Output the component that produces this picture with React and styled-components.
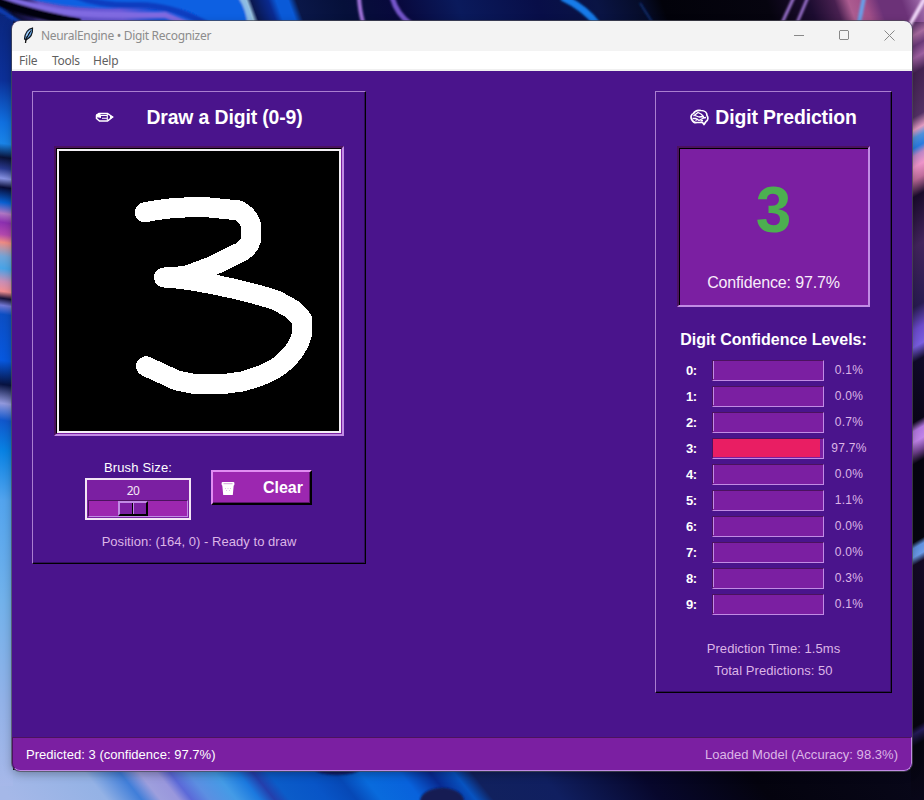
import React from "react";
import styled, { createGlobalStyle } from "styled-components";

const Global = createGlobalStyle`
  * { box-sizing: border-box; }
  html, body { margin: 0; padding: 0; overflow: hidden; background: #05050f; }
`;

const c = {
  bg: "#4a148c",
  surface: "#7b1fa2",
  accent: "#9c27b0",
  light: "#c18be4",
  dark: "#4b125f",
  muted: "#dcb5e6",
};

const Desktop = styled.main`
  position: relative;
  width: 924px;
  height: 800px;
  padding: 21px 12px 29px;
  overflow: hidden;
  font-family: "Liberation Sans", Arial, sans-serif;
  color: #fff;
`;

const WallpaperArt = styled.svg`
  position: absolute;
  inset: 0;
  width: 924px;
  height: 800px;
`;

const Window = styled.section`
  position: relative;
  display: flex;
  flex-direction: column;
  width: 900px;
  height: 750px;
  border-radius: 8px;
  overflow: hidden;
  background: ${c.bg};
  box-shadow: 0 0 0 1px rgba(75, 75, 85, 0.7), 0 3px 10px rgba(0, 0, 0, 0.3);
`;

const TitleBar = styled.header`
  display: flex;
  align-items: center;
  height: 30px;
  padding: 0 17px 0 10px;
  background: #f3f3f3;
  color: #8c8c8c;
  font: 12px/30px "Noto Sans", sans-serif;
`;

const Title = styled.span`
  flex: 1;
  margin-left: 7px;
  letter-spacing: -0.31px;
`;

const WindowButtons = styled.div`
  display: flex;
  gap: 34px;
  margin-top: -1px;
`;

const MenuBar = styled.nav`
  display: flex;
  gap: 14px;
  height: 20px;
  padding-left: 7px;
  background: #fff;
  border-bottom: 2px solid #f0f0f0;
  color: #5f5f5f;
  font: 12px/20px "Noto Sans", sans-serif;
`;

const MenuItem = styled.span`
  width: ${(p) => p.$width}px;
  letter-spacing: ${(p) => p.$tracking}px;
  white-space: nowrap;
`;

const Body = styled.div`
  flex: 1;
  display: flex;
  justify-content: space-between;
  align-items: flex-start;
  padding: 20px 20px 0;
`;

const Panel = styled.section`
  display: flex;
  flex-direction: column;
  align-items: center;
  width: ${(p) => p.$width}px;
  height: ${(p) => p.$height}px;
  padding-top: 14px;
  border: 1px solid;
  border-color: #aa7ed0 #000 #000 #aa7ed0;
  box-shadow: inset -1px -1px #310d5e;
`;

const Heading = styled.h2`
  display: flex;
  align-items: center;
  gap: ${(p) => p.$gap}px;
  height: 23px;
  margin: 0 0 17px;
  font-size: 19.4px;
  line-height: 23px;
  font-weight: 700;
  letter-spacing: -0.12px;
  white-space: nowrap;
`;

const Sunken = styled.div`
  border: 2px solid;
  border-color: ${c.dark} ${c.light} ${c.light} ${c.dark};
`;

const CanvasFrame = styled(Sunken)`
  width: 290px;
  height: 290px;
`;

const CanvasEdge = styled.div`
  border: 1px solid;
  border-color: #000 ${c.surface} ${c.surface} #000;
`;

const Canvas = styled.svg`
  display: block;
  width: 284px;
  height: 284px;
  border: 2px solid #f3eff5;
  background: #000;
`;

const Controls = styled.div`
  display: flex;
  gap: 20px;
  height: 84px;
  margin-top: 24px;
  align-self: flex-start;
  padding-left: 52px;
`;

const BrushControl = styled.div`
  display: flex;
  flex-direction: column;
  align-items: center;
  width: 106px;
`;

const Label = styled.span`
  height: 18px;
  font-size: 13px;
  line-height: 16px;
  letter-spacing: 0.15px;
`;

const Scale = styled.div`
  width: 106px;
  height: 42px;
  padding: 1px;
  border: 2px solid #f3e5f5;
  background: ${c.surface};
`;

const ScaleValue = styled.div`
  height: 19px;
  padding-right: 10px;
  text-align: center;
  color: #f3e5f5;
  font: 12px/20px "Noto Sans", sans-serif;
  letter-spacing: -0.5px;
`;

const Trough = styled.div`
  display: flex;
  height: 17px;
  padding-left: 29px;
  border: 1px solid;
  border-color: ${c.dark} ${c.light} ${c.light} ${c.dark};
  background: ${c.accent};
`;

const Thumb = styled.div`
  display: grid;
  grid-template-columns: 1fr 1fr;
  width: 30px;
  height: 15px;
  border: 2px solid;
  border-color: ${c.light} #000 #000 ${c.light};
  background: ${c.surface};
`;

const ThumbHalf = styled.span`
  border-left: ${(p) => (p.$left ? 0 : 1)}px solid ${c.light};
  border-right: ${(p) => (p.$left ? 1 : 0)}px solid #000;
`;

const ClearButton = styled.button`
  display: flex;
  align-items: center;
  justify-content: space-between;
  width: 101px;
  height: 35px;
  margin-top: 10px;
  padding: 1px 7px 0 8px;
  border: 2px solid;
  border-color: #e18df2 #000 #000 #e18df2;
  box-shadow: inset -1px -1px #5c176b;
  background: ${c.accent};
  color: #fff;
  font: 700 16px "Liberation Sans", Arial, sans-serif;
`;

const Position = styled.p`
  margin: -11px 0 0;
  font-size: 13px;
  line-height: 17px;
  letter-spacing: 0.03px;
  color: ${c.muted};
  white-space: nowrap;
`;

const Result = styled(Sunken)`
  width: 193px;
  height: 161px;
  background: ${c.surface};
  box-shadow: inset 1px 1px #000;
  text-align: center;
`;

const BigDigit = styled.div`
  margin-top: 26px;
  height: 73px;
  font-size: 64px;
  line-height: 73px;
  font-weight: 700;
  color: #4caf50;
`;

const Confidence = styled.div`
  margin-top: 26px;
  font-size: 16px;
  line-height: 19px;
  letter-spacing: -0.15px;
  color: #f8ecfa;
`;

const LevelsTitle = styled.h3`
  margin: 23px 0 11px;
  height: 19px;
  font-size: 16px;
  line-height: 19px;
  white-space: nowrap;
`;

const Levels = styled.div`
  display: flex;
  flex-direction: column;
  gap: 6px;
  width: 187px;
`;

const LevelRow = styled.div`
  display: grid;
  grid-template-columns: 32px 112px 50px;
  height: 20px;
`;

const LevelDigit = styled.span`
  padding-left: 6px;
  font-size: 13px;
  line-height: 21px;
  font-weight: 700;
  letter-spacing: -0.4px;
`;

const Track = styled.div`
  border: 1px solid;
  border-color: ${c.dark} ${c.light} ${c.light} ${c.dark};
  background: ${c.surface};
`;

const Fill = styled.div`
  height: 18px;
  background: ${(p) => (p.$active ? "#e91e63" : c.light)};
`;

const Percent = styled.span`
  font-size: 12px;
  line-height: 20px;
  letter-spacing: 0.25px;
  text-align: center;
  color: ${c.muted};
`;

const Stats = styled.div`
  margin-top: 24px;
  font-size: 13px;
  line-height: 22px;
  letter-spacing: 0.06px;
  text-align: center;
  color: ${c.muted};
`;

const StatusBar = styled.footer`
  display: flex;
  justify-content: space-between;
  height: 34px;
  padding: 0 13px;
  border: 1px solid;
  border-color: ${c.dark} ${c.light} ${c.light} ${c.dark};
  border-radius: 0 0 8px 8px;
  background: ${c.surface};
  font-size: 13px;
  line-height: 33px;
  letter-spacing: 0.03px;
`;

const StatusText = styled.span`
  color: ${(p) => (p.$muted ? c.muted : "#fff")};
`;

const stops = {
  top: [
    [0, "#0b2478"], [12, "#080a28"], [30, "#241c60"], [42, "#6452c4"], [120, "#6858d8"],
    [155, "#1450d8"], [205, "#0a62e8"], [228, "#1e86ff"], [242, "#62a8f0"], [250, "#9cc4dc"],
    [255, "#0a1850"], [272, "#0a2a90"], [280, "#0a5ad8"], [292, "#0a5ad8"], [300, "#0a1748"],
    [345, "#06103a"], [400, "#08083c"], [460, "#0a1a5c"], [540, "#080e48"], [600, "#0a1444"],
    [645, "#060c28"], [665, "#02020a"], [770, "#06040f"], [812, "#1c0c30"], [838, "#482050"],
    [852, "#ac5c90"], [868, "#a04e88"], [882, "#6c3278"], [905, "#6c3278"], [924, "#9c68a8"],
  ],
  left: [
    [0, "#0a2478"], [80, "#0c3098"], [122, "#1070e0"], [143, "#1a84e8"], [157, "#0a1238"],
    [168, "#28388c"], [178, "#8792e2"], [187, "#090c38"], [202, "#0860d2"], [213, "#b076c4"],
    [222, "#8c30b0"], [234, "#b348ae"], [242, "#ee8b84"], [256, "#72a4d8"], [268, "#48a4e8"],
    [281, "#c98fb7"], [291, "#f18d91"], [298, "#18133b"], [305, "#7278d5"], [314, "#0c4ec4"],
    [360, "#0758df"], [384, "#081342"], [403, "#9299dd"], [420, "#1057cc"], [450, "#0882e4"],
    [500, "#53a4ee"], [600, "#72b2eb"], [700, "#92b2e8"], [800, "#aab9e9"],
  ],
  right: [
    [0, "#efcdf3"], [12, "#d2afe5"], [19, "#49245b"], [33, "#a66a9e"], [44, "#6a3978"],
    [56, "#9d60a0"], [71, "#432251"], [115, "#523064"], [128, "#e29bc1"], [136, "#4f91dc"],
    [146, "#287ce0"], [154, "#be86c5"], [165, "#ee94c9"], [178, "#bf6c9b"], [195, "#1a0b2b"],
    [245, "#42245c"], [305, "#281b51"], [328, "#6b4acb"], [345, "#795ee0"], [360, "#100a28"],
    [420, "#0a0618"], [429, "#b276df"], [440, "#c184e9"], [451, "#70418e"], [462, "#06040f"],
    [540, "#06060f"], [546, "#5f91df"], [555, "#6b9be8"], [563, "#140a25"], [725, "#07050f"],
    [732, "#251b58"], [744, "#05050e"], [800, "#080618"],
  ],
  bottom: [
    [0, "#a5b8e8"], [95, "#94b2e5"], [130, "#407ed9"], [149, "#9e9fdd"], [167, "#9997dc"],
    [180, "#5b69d8"], [198, "#5c8fe2"], [225, "#449be6"], [248, "#1b79df"], [263, "#243fac"],
    [278, "#0b5cc9"], [315, "#0855c7"], [345, "#0648b6"], [370, "#096bdd"], [410, "#0862dc"],
    [440, "#082a91"], [464, "#0753c1"], [482, "#11215e"], [550, "#101f60"], [650, "#07072c"],
    [760, "#04030e"], [924, "#080719"],
  ],
};

const Ramp = ({ id, list, span, slant, vertical }) => (
  <linearGradient
    id={id}
    gradientUnits="userSpaceOnUse"
    x1="0"
    y1="0"
    x2={vertical ? 0 : span}
    y2={vertical ? span : 0}
    gradientTransform={slant}
  >
    {list.map(([at, color]) => (
      <stop key={at} offset={at / span} stopColor={color} />
    ))}
  </linearGradient>
);

function Wallpaper() {
  return (
    <WallpaperArt viewBox="0 0 924 800" aria-hidden="true">
      <defs>
        <Ramp id="top" list={stops.top} span={924} slant="translate(-4 0) skewX(20)" />
        <Ramp id="left" list={stops.left} span={800} slant="skewY(8)" vertical />
        <Ramp id="right" list={stops.right} span={800} slant="translate(0 530) skewY(-30)" vertical />
        <Ramp id="bottom" list={stops.bottom} span={924} slant="translate(-629 0) skewX(38.7)" />
        <filter id="soft"><feGaussianBlur stdDeviation="1.2" /></filter>
      </defs>
      <rect width="924" height="24" fill="url(#top)" />
      <rect y="770" width="924" height="30" fill="url(#bottom)" />
      <rect y="16" width="13" height="770" fill="url(#left)" />
      <rect x="911" y="22" width="13" height="778" fill="url(#right)" />
      <g fill="none" filter="url(#soft)">
        <path d="M18 -4Q75 12 135 7T205 24H250Q250 6 241-4Z" fill="#0a60e2" />
        <path d="M75 -4Q100 6 135 5T207 24" stroke="#0b3cc0" strokeWidth="6" />
        <path d="M-6-4Q32 6 58 11T165 15L190 25" stroke="#806be1" strokeWidth="6" />
        <path d="M-4 1Q27 13 80 23" stroke="#030309" strokeWidth="9" />
        <path d="M-2 9L24 25" stroke="#103cb0" strokeWidth="4" />
        <path d="M241-3Q249 10 250 24" stroke="#8dbbe4" strokeWidth="5" />
        <path d="M359-2Q360 12 363 22" stroke="#a374dc" strokeWidth="4" />
        <path d="M392-3Q397 15 411 24" stroke="#7555cb" strokeWidth="5" />
        <path d="M562-3Q585 8 597 24" stroke="#127be9" strokeWidth="7" />
        <path d="M640 3L652 22" stroke="#102f70" strokeWidth="2" />
        <path d="M794-3L782 23M808-3L797 23" stroke="#9870ca" strokeWidth="3" />
        <path d="M864-3L859 23" stroke="#689ee8" strokeWidth="4" />
        <path d="M925-2L908 28" stroke="#efd5f7" strokeWidth="4" />
        <ellipse cx="337" cy="769" rx="22" ry="6" fill="#0b1e65" />
        <ellipse cx="442" cy="801" rx="22" ry="13" fill="#131b52" />
      </g>
    </WallpaperArt>
  );
}

const Feather = () => (
  <svg width="12" height="18" viewBox="0 0 12 18">
    <path d="M10.5 1C6 2 3 6 2.5 12L4 13C8 11 11 7 10.5 1Z" fill="#69a7e8" stroke="#111820" strokeWidth="1.2" />
    <path d="M9 3L4 12L3.5 16" fill="none" stroke="#111" strokeWidth="1.3" />
    <path d="M8.5 3Q5.2 6 4.5 9" fill="none" stroke="#b6dcff" strokeWidth="1" />
  </svg>
);

const ControlIcon = ({ d }) => (
  <svg width="11" height="11" viewBox="0 0 11 11">
    <path d={d} fill="none" stroke="#888" strokeWidth="1" />
  </svg>
);

const Pencil = () => (
  <svg width="19" height="11" viewBox="0 0 19 11">
    <path d="M4 1.5H12.5L17.5 5L12.5 9H4.5L1.5 6.5V3.5Z" fill="none" stroke="#fff" strokeWidth="1.5" />
    <path d="M1 2.5L4 1L6 3V6L3.5 5.5L1 5Z M15 3L18.5 5L15 7.5Z" fill="#fff" />
    <path d="M6 3.5H12M7 6.3H12M12.3 2V8.5" fill="none" stroke="#fff" strokeWidth="1.1" />
  </svg>
);

const Brain = () => (
  <svg width="19" height="17" viewBox="0 0 19 17" fill="none" stroke="#fff" strokeLinejoin="round">
    <path d="M2 11C0 8 1.5 5 3.5 4.5C5 1.5 8 1 11 1.5C15 1.5 17 4 17 6.5C18.5 8.5 18 11.5 16 12.5L14 15.5L12.5 13.5H7C4.5 14 3 13 2 11Z" strokeWidth="1.7" />
    <path d="M3.5 7L8 3.5L11 5L13.5 7.5L9 8L5 6.5M2.5 9.5H6L9 11.5L13.5 9L16 8.5" strokeWidth="1.3" />
    <path d="M5.5 11.5L8 10M10.5 12L13 11.5" strokeWidth="1.3" />
  </svg>
);

const Trash = () => (
  <svg width="14" height="15" viewBox="0 0 14 15">
    <path d="M1.2 3.5H12.8L11.8 14H2.2Z" fill="#fff" />
    <rect x=".6" y="1" width="12.8" height="3.4" rx="1" fill="#fff" />
    <path d="M2.5 2.7H11.5" stroke="#c78bd1" strokeWidth=".8" />
    <path d="M4 7.5H5M6.5 7.5H7.5M9 7.5H10M5 9.5H6M8 9.5H9" stroke="#e3c2e8" strokeWidth="1" />
  </svg>
);

const levels = [0.1, 0.0, 0.7, 97.7, 0.0, 1.1, 0.0, 0.0, 0.3, 0.1];

export default function App() {
  return (
    <Desktop>
      <Global />
      <Wallpaper />
      <Window>
        <TitleBar>
          <Feather />
          <Title>NeuralEngine • Digit Recognizer</Title>
          <WindowButtons>
            <ControlIcon d="M0 5.5H10" />
            <ControlIcon d="M1 .5H9L9.5 1V9L9 9.5H1L.5 9V1Z" />
            <ControlIcon d="M.5 .5L10.5 10.5M10.5 .5L.5 10.5" />
          </WindowButtons>
        </TitleBar>
        <MenuBar>
          <MenuItem $width={19} $tracking={-0.2}>File</MenuItem>
          <MenuItem $width={27} $tracking={-0.3}>Tools</MenuItem>
          <MenuItem $width={25} $tracking={-0.2}>Help</MenuItem>
        </MenuBar>
        <Body>
          <Panel $width={334} $height={473}>
            <Heading $gap={32}>
              <Pencil />
              <span>Draw a Digit (0-9)</span>
            </Heading>
            <CanvasFrame>
              <CanvasEdge>
                <Canvas viewBox="0 0 280 280">
                  <path
                    d="M85.7 61.3C105 57 125 56 145 56L180 59.5L186 64Q192 70 192 76V89Q190 96 182 101L151 116L135 122L127 125L105 126.5C135 128 190 140 218 149.7L233 158L243 168V183C240 195 232 205 225 211C214 221 200 226 183 230.5L165 233H135L118 229.5L87 215.3"
                    fill="none"
                    stroke="#fff"
                    strokeWidth="20"
                    strokeLinecap="round"
                    strokeLinejoin="round"
                    shapeRendering="crispEdges"
                  />
                </Canvas>
              </CanvasEdge>
            </CanvasFrame>
            <Controls>
              <BrushControl>
                <Label>Brush Size:</Label>
                <Scale>
                  <ScaleValue>20</ScaleValue>
                  <Trough>
                    <Thumb>
                      <ThumbHalf $left />
                      <ThumbHalf />
                    </Thumb>
                  </Trough>
                </Scale>
              </BrushControl>
              <ClearButton>
                <Trash />
                <span>Clear</span>
              </ClearButton>
            </Controls>
            <Position>Position: (164, 0) - Ready to draw</Position>
          </Panel>
          <Panel $width={237} $height={602}>
            <Heading $gap={6}>
              <Brain />
              <span>Digit Prediction</span>
            </Heading>
            <Result>
              <BigDigit>3</BigDigit>
              <Confidence>Confidence: 97.7%</Confidence>
            </Result>
            <LevelsTitle>Digit Confidence Levels:</LevelsTitle>
            <Levels>
              {levels.map((value, digit) => (
                <LevelRow key={digit}>
                  <LevelDigit>{digit}:</LevelDigit>
                  <Track>
                    <Fill $active={value > 50} style={{ width: Math.max(1, Math.round(value * 1.1)) }} />
                  </Track>
                  <Percent>{value.toFixed(1)}%</Percent>
                </LevelRow>
              ))}
            </Levels>
            <Stats>
              <div>Prediction Time: 1.5ms</div>
              <div>Total Predictions: 50</div>
            </Stats>
          </Panel>
        </Body>
        <StatusBar>
          <StatusText>Predicted: 3 (confidence: 97.7%)</StatusText>
          <StatusText $muted>Loaded Model (Accuracy: 98.3%)</StatusText>
        </StatusBar>
      </Window>
    </Desktop>
  );
}
